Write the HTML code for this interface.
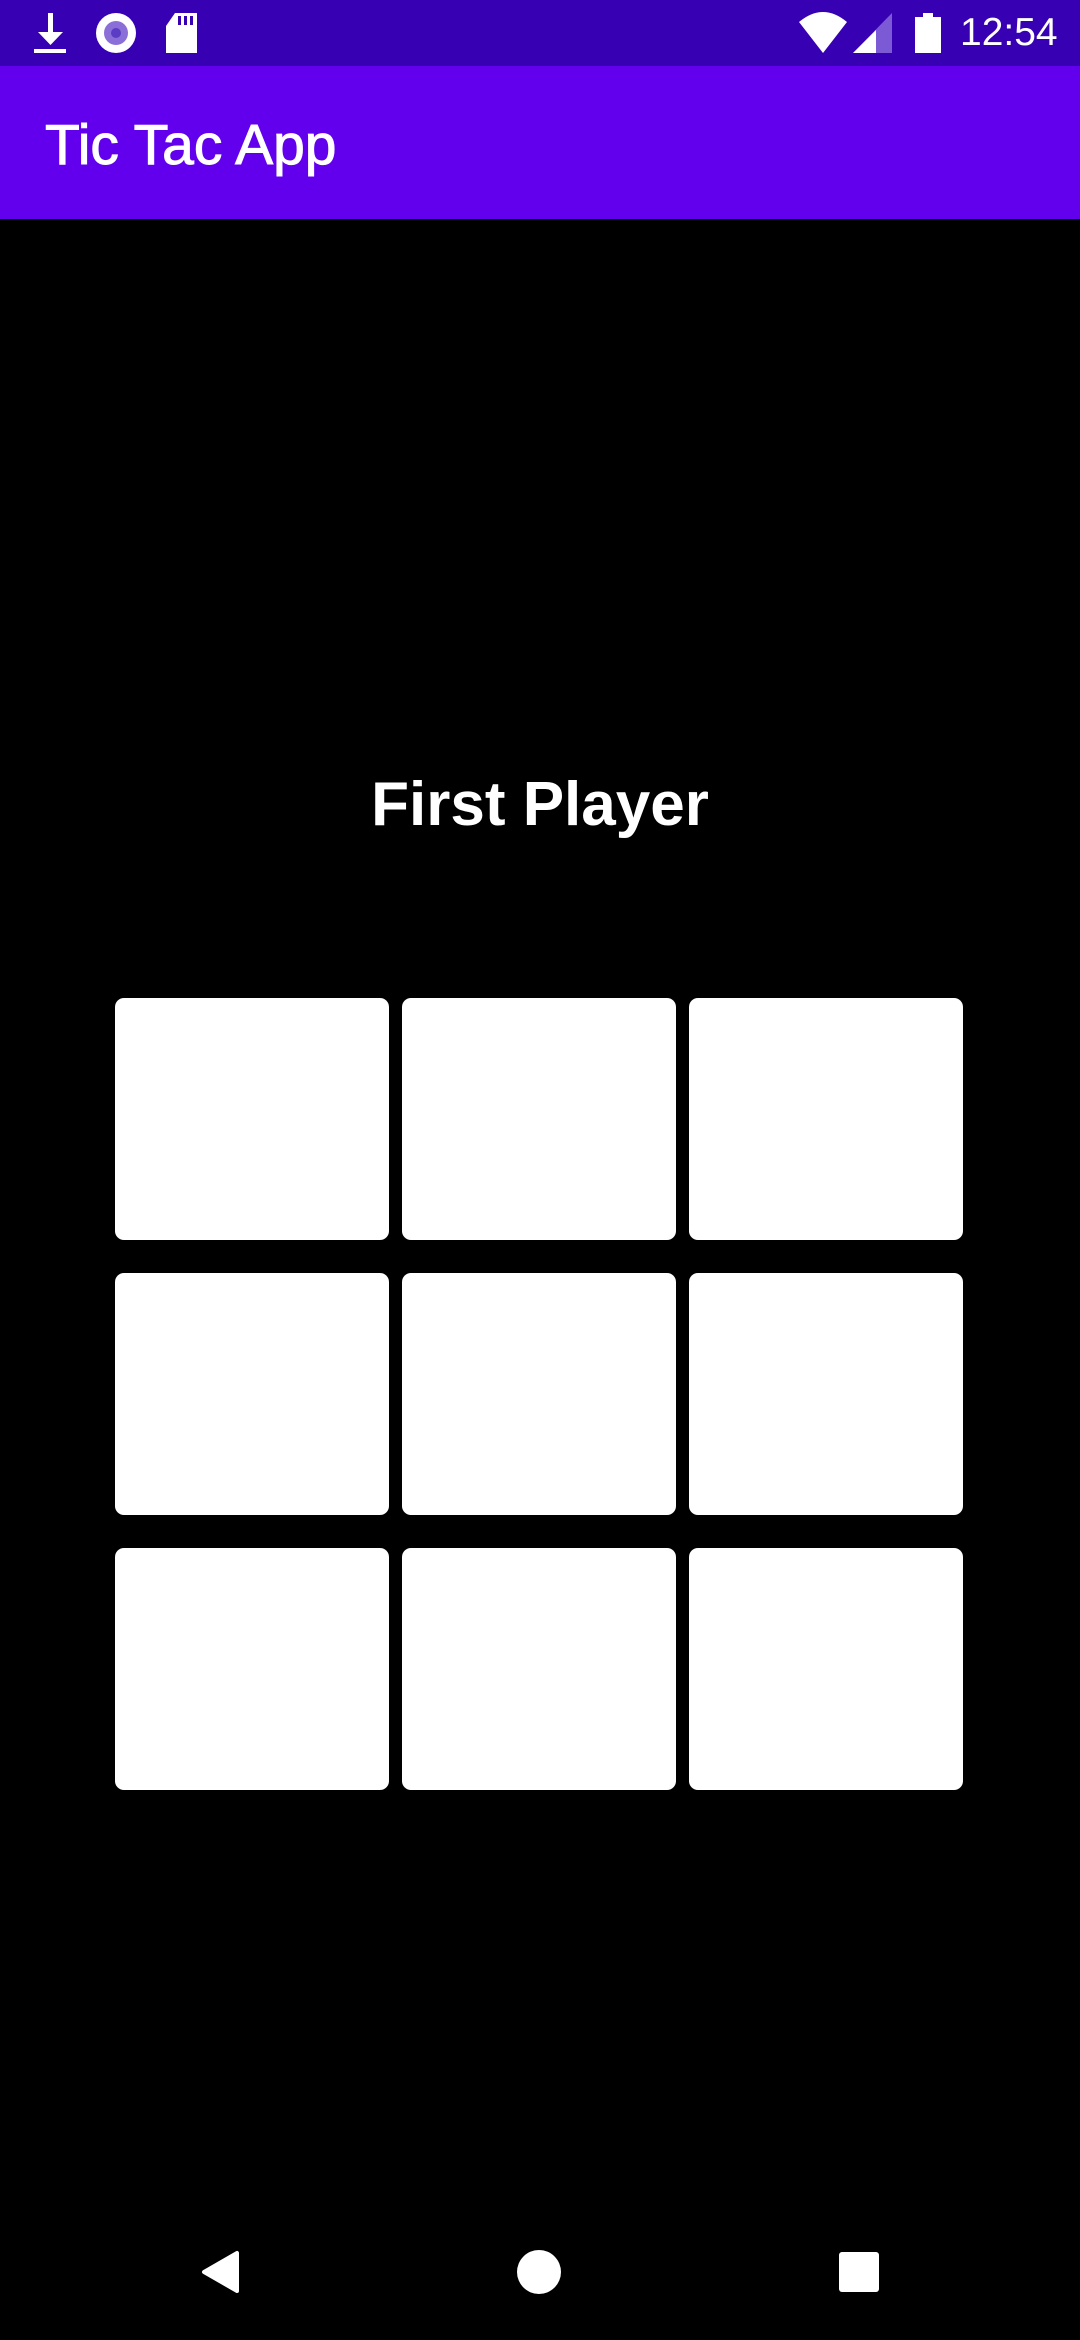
<!DOCTYPE html>
<html><head><meta charset="utf-8"><style>
*{margin:0;padding:0;box-sizing:border-box}
body{width:1080px;height:2340px;background:#000;position:relative;overflow:hidden;font-family:"Liberation Sans",Roboto,sans-serif}
.sb{position:absolute;left:0;top:0;width:1080px;height:66px;background:#3700b3}
.ab{position:absolute;left:0;top:66px;width:1080px;height:153px;background:#6200ee}
.title{position:absolute;left:45px;top:112px;color:#fff;font-size:57px;line-height:66px;font-weight:500;-webkit-text-stroke:1px #fff}
.fp{position:absolute;left:0;width:1080px;top:765px;text-align:center;color:#fff;font-size:62px;font-weight:bold;line-height:80px}
.c{position:absolute;background:#fff;border-radius:9px;width:274px;height:242px}
.time{position:absolute;left:960px;top:10px;color:#fff;font-size:39px;line-height:46px}
</style></head><body>
<div class="sb">
<svg width="1080" height="66" style="position:absolute;left:0;top:0">
<g fill="#fff">
<rect x="48" y="13" width="5" height="24"/>
<polygon points="38,32 63,32 50.5,45"/>
<rect x="34" y="49" width="32" height="4"/>
<circle cx="116" cy="33" r="20"/>
<circle cx="116" cy="33" r="12" fill="#8a6fd8"/>
<circle cx="116" cy="33" r="5" fill="#5b3cc4"/>
<path d="M175 13 H197 V53 H166 V26 Z"/>
<path d="M799 22 Q823 2 847 22 L823 53 Z"/>
<polygon points="853,53 892,13 892,53" fill="#7c5ad6"/>
<polygon points="853,53 876,30 876,53"/>
<rect x="915" y="17" width="26" height="36"/>
<rect x="923" y="13" width="10" height="5"/>
</g>
<g fill="#3700b3"><rect x="178" y="16" width="3" height="9"/><rect x="184" y="16" width="3" height="9"/><rect x="190" y="16" width="3" height="9"/></g>
</svg>
<div class="time">12:54</div>
</div>
<div class="ab"></div>
<div class="title">Tic Tac App</div>
<div class="fp">First Player</div>
<div class="c" style="left:115px;top:998px"></div>
<div class="c" style="left:402px;top:998px"></div>
<div class="c" style="left:689px;top:998px"></div>
<div class="c" style="left:115px;top:1273px"></div>
<div class="c" style="left:402px;top:1273px"></div>
<div class="c" style="left:689px;top:1273px"></div>
<div class="c" style="left:115px;top:1548px"></div>
<div class="c" style="left:402px;top:1548px"></div>
<div class="c" style="left:689px;top:1548px"></div>
<svg width="1080" height="120" style="position:absolute;left:0;top:2212px">
<g fill="#fff">
<polygon points="204,60 237,41 237,79" stroke="#fff" stroke-width="4" stroke-linejoin="round"/>
<circle cx="539" cy="60" r="22"/>
<rect x="839" y="40" width="40" height="40" rx="3"/>
</g>
</svg>
</body></html>
